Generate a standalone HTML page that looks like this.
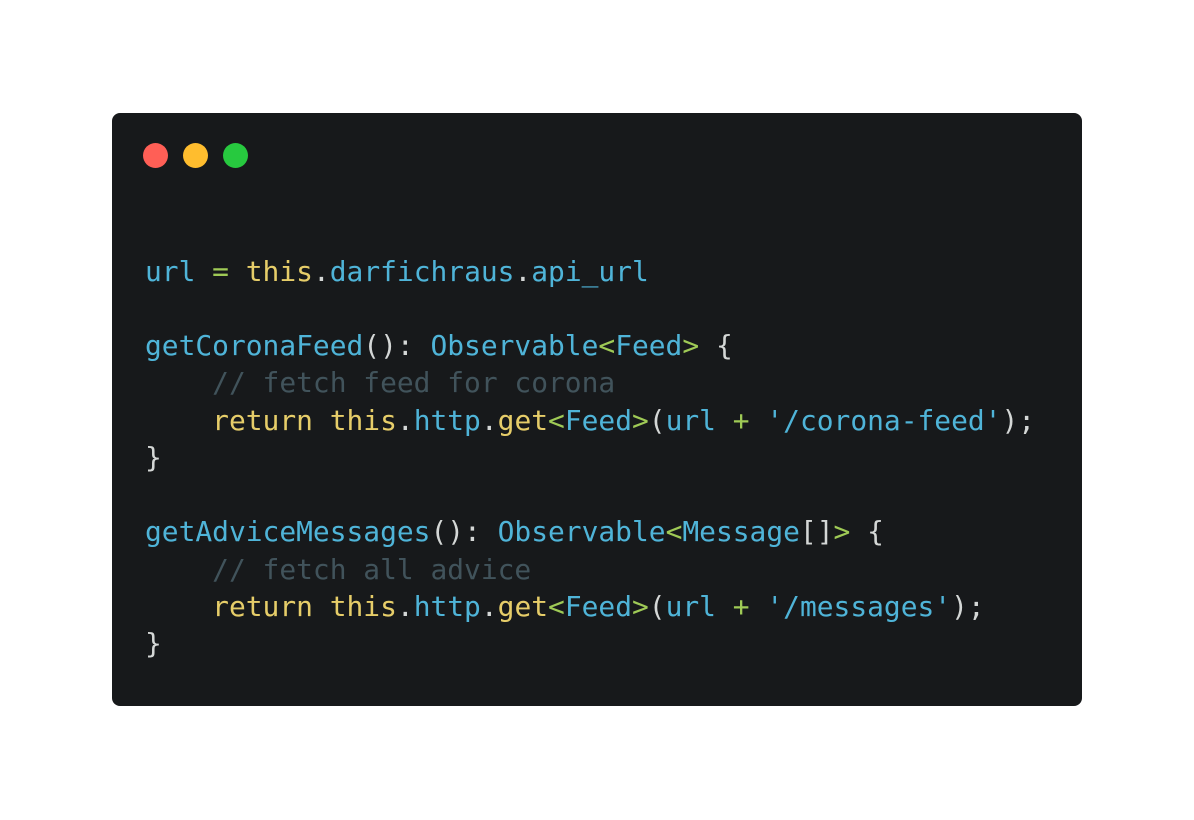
<!DOCTYPE html>
<html><head><meta charset="utf-8"><style>
html,body{margin:0;padding:0;background:#fff;width:1194px;height:820px;overflow:hidden}
.card{position:absolute;left:112px;top:113px;width:970px;height:593px;background:#17191b;border-radius:8px}
.dot{position:absolute;top:143px;width:25px;height:25px;border-radius:50%}
pre{position:absolute;left:145px;top:252.7px;margin:0;font-family:"DejaVu Sans Mono","Liberation Mono",monospace;font-size:27.9px;line-height:37.25px;color:#d4d7d6}
.b{color:#4fb4d8}.y{color:#e6cd69}.g{color:#9fca56}.c{color:#41535b}
</style></head><body>
<div class="card"></div>
<div class="dot" style="left:142.5px;background:#ff5f56"></div>
<div class="dot" style="left:182.5px;background:#ffbd2e"></div>
<div class="dot" style="left:222.5px;background:#27c93f"></div>
<pre><span class="b">url</span> <span class="g">=</span> <span class="y">this</span>.<span class="b">darfichraus</span>.<span class="b">api_url</span>

<span class="b">getCoronaFeed</span>(): <span class="b">Observable</span><span class="g">&lt;</span><span class="b">Feed</span><span class="g">&gt;</span> {
    <span class="c">// fetch feed for corona</span>
    <span class="y">return</span> <span class="y">this</span>.<span class="b">http</span>.<span class="y">get</span><span class="g">&lt;</span><span class="b">Feed</span><span class="g">&gt;</span>(<span class="b">url</span> <span class="g">+</span> <span class="b">'/corona-feed'</span>);
}

<span class="b">getAdviceMessages</span>(): <span class="b">Observable</span><span class="g">&lt;</span><span class="b">Message</span>[]<span class="g">&gt;</span> {
    <span class="c">// fetch all advice</span>
    <span class="y">return</span> <span class="y">this</span>.<span class="b">http</span>.<span class="y">get</span><span class="g">&lt;</span><span class="b">Feed</span><span class="g">&gt;</span>(<span class="b">url</span> <span class="g">+</span> <span class="b">'/messages'</span>);
}</pre>
</body></html>
